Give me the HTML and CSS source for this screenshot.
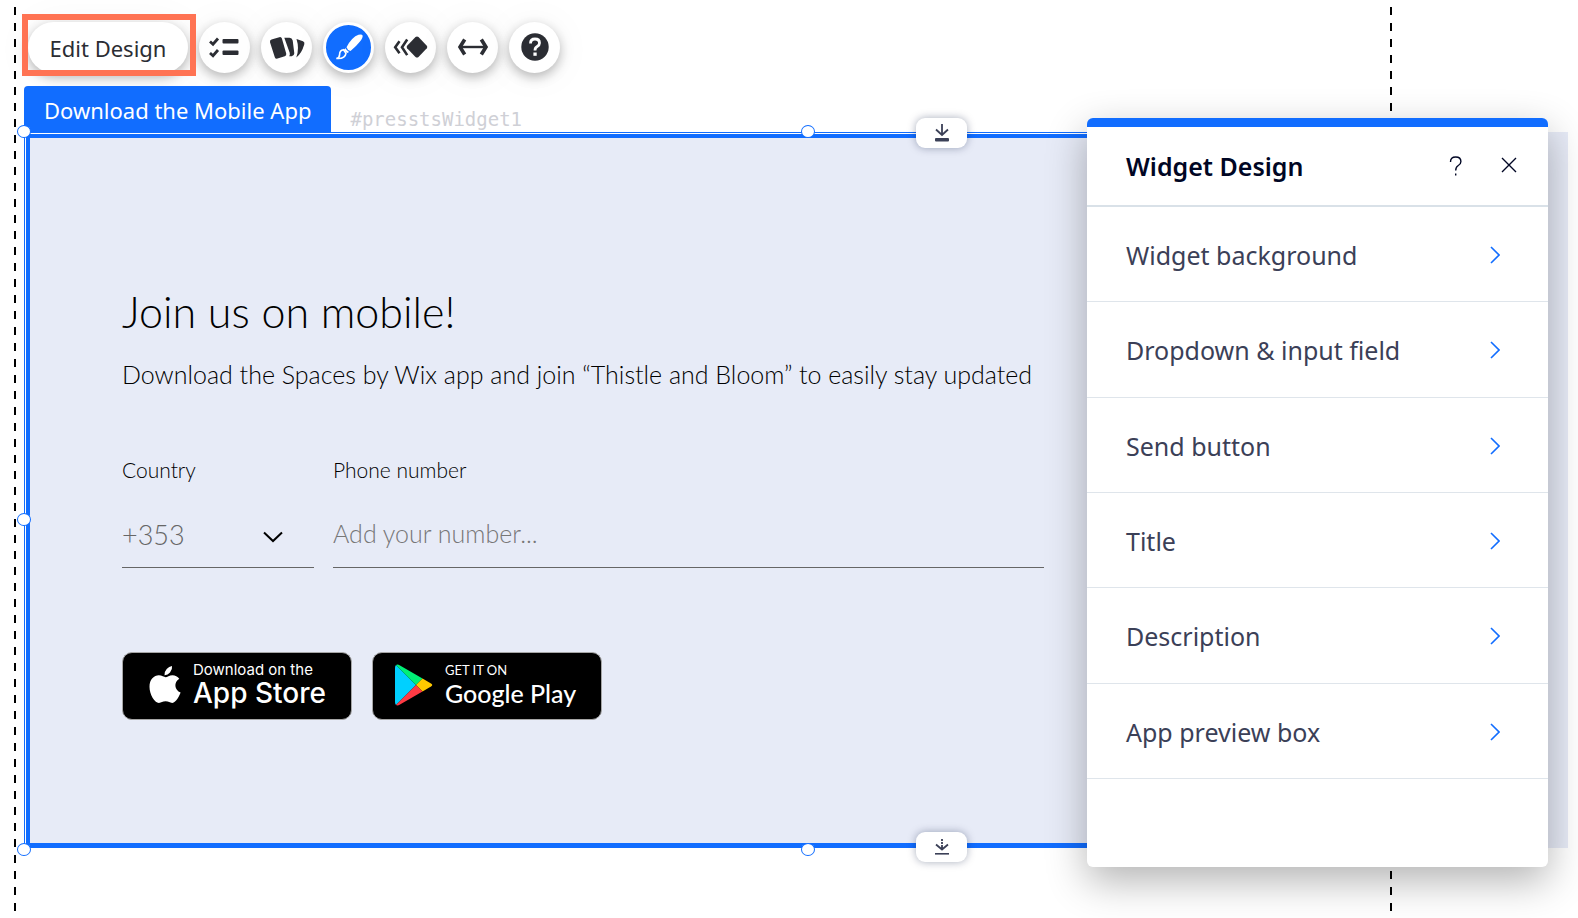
FILE: index.html
```html
<!DOCTYPE html>
<html lang="en">
<head>
    <meta charset="UTF-8">
    <meta name="viewport" content="width=device-width, initial-scale=1.0">
    <title>Widget Design</title>
    <link rel="stylesheet" href="styles.css">
</head>
<body>
    <main class="stage">
        <div class="guide guide-left"></div>
        <div class="guide guide-right"></div>

        <div class="toolbar">
            <div class="highlight">
                <button type="button" class="edit-button">Edit Design</button>
            </div>
            <button type="button" class="tool" aria-label="Settings">
                <svg viewBox="0 0 51 51">
                    <path d="M11 19.5l3 2.7 5-5.7M11 31l3 2.7 5-5.7" fill="none" stroke="#2b2d33" stroke-width="2.8"/>
                    <rect x="23.5" y="17" width="16" height="4.5" rx="1"/>
                    <rect x="23.5" y="28.5" width="16" height="4.5" rx="1"/>
                </svg>
            </button>
            <button type="button" class="tool" aria-label="Layouts">
                <svg viewBox="0 0 51 51">
                    <path d="M10.5 17.6l7.8-2.4q2-.6 2.6 1.4l4.3 15q.5 2-1.4 2.6l-7.3 2.4q-2 .5-2.7-1.4L9 20.3q-.5-2 1.5-2.7z"/>
                    <path d="M23.3 15.7h5.2q2.6.2 3.2 2.7l1.6 12.8q0 2.6-2.6 3h-2.5q1-1.3.5-3.500z"/>
                    <path d="M33.7 16.5l1.7.3q5 8.500 1.5 17.500l-2 .5q2.300-9-1.200-18.300z" fill="#fff"/>
                    <path d="M35.5 17l6.5 2.200q2 .9 1.300 3-2.600 9.200-8 13.300 3.300-9 .2-18.500z"/>
                </svg>
            </button>
            <button type="button" class="tool tool-active" aria-label="Design">
                <svg viewBox="0 0 51 51">
                    <path d="M23.500 25.200q5.500-10.200 12-12.400 3.500-1 4.100.8.500 2.200-2.600 6-3.800 5-9.500 9.300-3.200-.7-4-3.700z"/>
                    <path d="M22.600 26.200q1 2.600 3.500 3.700l-1.900 1.200q-1.800-1.300-3.200-3.500z"/>
                    <path d="M20.500 27.700q-4 .6-3.900 4.800.1 3-3.200 4 8.800.7 9.600-5.300z" fill="none" stroke="#fff" stroke-width="1.600"/>
                </svg>
            </button>
            <button type="button" class="tool" aria-label="Animation">
                <svg viewBox="0 0 51 51">
                    <path d="M14.500 19.300l-4.300 6 4.300 6M22.200 17.500L17 25.300l5.200 7.800" fill="none" stroke="#2b2d33" stroke-width="2.600"/>
                    <path d="M30.500 15q1.500-1.200 3 0l8.300 8.700q1 1.300 0 2.600L33.500 35q-1.500 1.200-3 0l-8.400-8.700q-1-1.300 0-2.600z"/>
                </svg>
            </button>
            <button type="button" class="tool" aria-label="Stretch">
                <svg viewBox="0 0 51 51">
                    <path d="M17.700 17.500L13 25l4.700 7.500M34.300 17.500L39 25l-4.700 7.500" fill="none" stroke="#2b2d33" stroke-width="3.600"/>
                    <path d="M13 25h26" fill="none" stroke="#2b2d33" stroke-width="2.400"/>
                </svg>
            </button>
            <button type="button" class="tool" aria-label="Help">
                <svg viewBox="0 0 51 51">
                    <circle cx="26" cy="25" r="13.700"/>
                    <path d="M21.500 21.500q0-4.500 4.500-4.500t4.500 4q0 2.200-2.300 3.500-2.200 1.200-2.200 4" fill="none" stroke="#fff" stroke-width="2.800"/>
                    <rect x="24.400" y="30.500" width="3.300" height="3.300" fill="#fff"/>
                </svg>
            </button>
        </div>

        <div class="tag-row">
            <span class="tag">Download the Mobile App</span>
            <code class="tag-id">#presstsWidget1</code>
        </div>

        <section class="widget">
            <h1 class="widget-title">Join us on mobile!</h1>
            <p class="widget-text">Download the Spaces by Wix app and join “Thistle and Bloom” to easily stay updated</p>

            <form class="fields">
                <div class="field">
                    <label for="country">Country</label>
                    <select id="country" name="country">
                        <option>+353</option>
                    </select>
                    <svg class="arrow" viewBox="0 0 20 12"><path d="M1 1.500l9 8.500 9-8.500" fill="none" stroke="#000" stroke-width="2"/></svg>
                </div>
                <div class="field">
                    <label for="phone">Phone number</label>
                    <input type="tel" id="phone" name="phone" placeholder="Add your number...">
                </div>
            </form>

            <div class="stores">
                <a class="store" href="#">
                    <svg class="store-icon" viewBox="0 0 32 38">
                        <path fill="#fff" d="M23 0q.6 3.700-2 6.600-2.300 2.700-5.500 2.600-.3-3.400 2.200-6.200Q20 .5 23 0zM16.600 11.200c1.600 0 3.600-2 7-2 2.500 0 5 1.200 6.700 3.600-5.800 3.500-5 11.400 1.300 13.800-1 3-4.500 10.200-8.300 10.300-2.700 0-3.500-1.600-6.700-1.600s-4.200 1.600-6.700 1.600C5.500 36.900.5 28.500.5 20.800c0-7.400 4.700-11.500 9.300-11.500 3 0 5.300 1.900 6.800 1.900z"/>
                    </svg>
                    <span class="store-text store-apple">
                        <small>Download on the</small>
                        <strong>App Store</strong>
                    </span>
                </a>
                <a class="store" href="#">
                    <svg class="store-icon store-play" viewBox="0 0 38 42">
                        <path fill="#00d0ff" d="M1 1q-1 1-1 3v34q0 2 1 3l20-20z"/>
                        <path fill="#00f076" d="M1 1q1.500-1 4 .5L27.500 14.500 21 21z"/>
                        <path fill="#ffc900" d="M27.500 14.500l8.500 5q2.500 1.500 0 3l-8.500 5L21 21z"/>
                        <path fill="#ff3a44" d="M1 41q1.500 1 4-.5l22.500-13L21 21z"/>
                    </svg>
                    <span class="store-text store-google">
                        <small>GET IT ON</small>
                        <strong>Google Play</strong>
                    </span>
                </a>
            </div>

            <div class="selection">
                <i class="handle handle-tl"></i>
                <i class="handle handle-top"></i>
                <i class="handle handle-left"></i>
                <i class="handle handle-bl"></i>
                <i class="handle handle-bottom"></i>
                <button type="button" class="snap snap-top" aria-label="Attach top">
                    <svg viewBox="0 0 16 20"><path d="M8 1v10M2 6.500l6 5.500 6-5.500" fill="none" stroke="#3b4057" stroke-width="1.800"/><rect x="1" y="15" width="14" height="3.500" rx="1" fill="#3b4057"/></svg>
                </button>
                <button type="button" class="snap snap-bottom" aria-label="Attach bottom">
                    <svg viewBox="0 0 16 20"><path d="M8 2v2M8 5v2M8 8v4M2 7.500l6 5 6-5" fill="none" stroke="#3b4057" stroke-width="1.800"/><rect x="1" y="16" width="14" height="1.600" fill="#3b4057"/></svg>
                </button>
            </div>
        </section>

        <aside class="panel">
            <header class="panel-header">
                <h2>Widget Design</h2>
                <button type="button" aria-label="Help">
                    <svg viewBox="0 0 16 20"><path d="M2.500 6q0-5 5.200-5t5.200 4.500q0 2.500-2.600 4Q7.700 11 7.700 14.500M7.700 17.500v2" fill="none" stroke="#000624" stroke-width="1.400"/></svg>
                </button>
                <button type="button" aria-label="Close">
                    <svg viewBox="0 0 16 20"><path d="M1 2l14 14M15 2L1 16" fill="none" stroke="#000624" stroke-width="1.400"/></svg>
                </button>
            </header>
            <div class="panel-list">
                <button type="button" class="panel-row">Widget background <svg viewBox="0 0 10 18"><path d="M1 1l8 8-8 8"/></svg></button>
                <button type="button" class="panel-row">Dropdown &amp; input field <svg viewBox="0 0 10 18"><path d="M1 1l8 8-8 8"/></svg></button>
                <button type="button" class="panel-row">Send button <svg viewBox="0 0 10 18"><path d="M1 1l8 8-8 8"/></svg></button>
                <button type="button" class="panel-row">Title <svg viewBox="0 0 10 18"><path d="M1 1l8 8-8 8"/></svg></button>
                <button type="button" class="panel-row">Description <svg viewBox="0 0 10 18"><path d="M1 1l8 8-8 8"/></svg></button>
                <button type="button" class="panel-row">App preview box <svg viewBox="0 0 10 18"><path d="M1 1l8 8-8 8"/></svg></button>
            </div>
        </aside>
    </main>
</body>
</html>
```
FILE: styles.css
```css
* {
    box-sizing: border-box;
}

body {
    margin: 0;
    background-color: #fff;
    font-family: "Noto Sans", sans-serif;
}

button {
    margin: 0;
    padding: 0;
    border: none;
    background: none;
    font-family: inherit;
    cursor: pointer;
}

.stage {
    position: relative;
    min-height: 100vh;
    padding: 22px 10px 70px 24px;
    overflow: hidden;
}

/* dashed page margins */
.guide {
    position: absolute;
    top: 7px;
    bottom: 7px;
    width: 2px;
    background: repeating-linear-gradient(#000 0 8px, transparent 8px 16px);
}

.guide-left {
    left: 14px;
}

.guide-right {
    right: 186px;
}

/* toolbar */
.toolbar {
    display: flex;
    gap: 11px;
    padding-left: 4px;
}

.highlight {
    position: relative;
}

.highlight::after {
    content: "";
    position: absolute;
    inset: -8px -8px -3px -6px;
    border: 6px solid #ff7353;
    pointer-events: none;
}

.edit-button,
.tool {
    height: 51px;
    border-radius: 26px;
    background-color: #fff;
    box-shadow: 0 4px 12px rgba(0, 0, 0, 0.28), 0 2px 40px rgba(0, 0, 0, 0.05);
}

.edit-button {
    width: 160px;
    color: #2b2d33;
    font-size: 22px;
}

.tool {
    width: 51px;
}

.tool svg {
    display: block;
    width: 51px;
    height: 51px;
    fill: #2b2d33;
}

.tool-active {
    border: 3px solid #fff;
    background-color: #116dff;
}

.tool-active svg {
    margin: -3px;
    fill: #fff;
}

/* widget label */
.tag-row {
    position: relative;
    display: flex;
    gap: 19px;
    margin-top: 13px;
}

.tag {
    padding: 1px 20px 0;
    border-radius: 4px 4px 0 0;
    background-color: #116dff;
    color: #fff;
    font-size: 22px;
    line-height: 46px;
}

.tag-id {
    padding-top: 20px;
    color: #cfd0d6;
    font-family: "DejaVu Sans Mono", monospace;
    font-size: 19px;
    line-height: 26px;
}

/* widget */
.widget {
    position: relative;
    margin-top: -1px;
    padding: 150px 98px 128px;
    background-color: #e7ebf7;
    color: #000;
    font-family: Lato, sans-serif;
    font-weight: 300;
}

.widget-title {
    margin: 0;
    font-size: 43px;
    font-weight: 300;
    line-height: 60px;
}

.widget-text {
    margin: 14px 0 0;
    font-size: 25px;
    line-height: 36px;
}

.fields {
    display: grid;
    grid-template-columns: 192px 1fr;
    gap: 19px;
    max-width: 922px;
    margin-top: 63px;
}

.field {
    position: relative;
}

.field label {
    display: block;
    font-size: 21px;
    line-height: 30px;
}

.field input,
.field select {
    display: block;
    width: 100%;
    height: 67px;
    margin-top: 16px;
    padding: 0;
    border: none;
    border-bottom: 1px solid #666;
    border-radius: 0;
    background: none;
    color: #666;
    font-family: inherit;
    font-size: 25px;
    font-weight: 300;
    appearance: none;
}

.field select {
    font-size: 27px;
}

.field input {
    padding-bottom: 3px;
}

.field input::placeholder {
    color: #777;
}

.arrow {
    position: absolute;
    right: 31px;
    bottom: 25px;
    width: 20px;
    height: 12px;
    pointer-events: none;
}

/* store badges */
.stores {
    display: flex;
    gap: 20px;
    margin-top: 84px;
}

.store {
    display: flex;
    gap: 12px;
    width: 230px;
    height: 68px;
    padding: 9px 0 0 26px;
    border: 1px solid #a6a6a6;
    border-radius: 10px;
    background-color: #000;
    color: #fff;
    text-decoration: none;
}

.store-icon {
    width: 32px;
    height: 38px;
    margin-top: 4px;
}

.store-play {
    width: 38px;
    height: 42px;
    margin: 2px 0 0 -4px;
}

.store-text {
    display: flex;
    flex-direction: column;
}

.store-text small {
    font-size: 15px;
    font-weight: 400;
    line-height: 16px;
}

.store-text strong {
    font-size: 28px;
    font-weight: 500;
    line-height: 30px;
}

.store-apple {
    font-family: Inter, sans-serif;
}

.store-google {
    font-family: Lato, sans-serif;
}

.store-google small {
    font-size: 13px;
}

.store-google strong {
    font-size: 25px;
}

/* selection frame */
.selection {
    position: absolute;
    inset: 0 20px 0 0;
    border: 1px solid #116dff;
    border-width: 1px 0 0 1px;
    pointer-events: none;
}

.selection::before {
    content: "";
    position: absolute;
    inset: 1px 0 0 1px;
    border: 4px solid #116dff;
    border-right: none;
    border-bottom-width: 5px;
    box-shadow: -1px -1px 0 #fff;
}

.handle {
    position: absolute;
    width: 14px;
    height: 13px;
    margin: -8px;
    border: 1px solid #116dff;
    border-radius: 50%;
    background-color: #fff;
}

.handle-tl {
    top: 0;
    left: 0;
}

.handle-top {
    top: 0;
    left: 784px;
}

.handle-left {
    top: 388px;
    left: 0;
}

.handle-bl {
    bottom: 0;
    left: 0;
}

.handle-bottom {
    bottom: 0;
    left: 784px;
}

.snap {
    position: absolute;
    left: 891px;
    display: grid;
    place-items: center;
    width: 51px;
    height: 30px;
    border-radius: 9px;
    background-color: #fff;
    box-shadow: 0 0 8px rgba(0, 20, 60, 0.35);
    pointer-events: auto;
}

.snap svg {
    width: 16px;
    height: 20px;
}

.snap-top {
    top: -15px;
}

.snap-bottom {
    bottom: -14px;
}

/* design panel */
.panel {
    position: absolute;
    top: 118px;
    right: 30px;
    bottom: 51px;
    display: flex;
    flex-direction: column;
    width: 461px;
    padding-bottom: 88px;
    border-top: 9px solid #116dff;
    border-radius: 6px;
    background-color: #fff;
    box-shadow: 0 14px 40px rgba(0, 0, 0, 0.3);
}

.panel-header {
    display: flex;
    align-items: center;
    gap: 37px;
    height: 80px;
    padding: 0 31px 0 39px;
    border-bottom: 2px solid #d9e1e8;
}

.panel-header h2 {
    flex: 1;
    margin: 0;
    color: #000624;
    font-size: 25px;
    font-weight: 600;
}

.panel-header svg {
    display: block;
    width: 16px;
    height: 20px;
}

.panel-list {
    display: grid;
    grid-auto-rows: 1fr;
    flex: 1;
}

.panel-row {
    display: flex;
    align-items: center;
    justify-content: space-between;
    padding: 2px 48px 0 39px;
    border-bottom: 1px solid #dfe5eb;
    color: #3b4057;
    font-size: 25px;
}

.panel-row svg {
    width: 10px;
    height: 18px;
    fill: none;
    stroke: #116dff;
    stroke-width: 1.6;
}
```
